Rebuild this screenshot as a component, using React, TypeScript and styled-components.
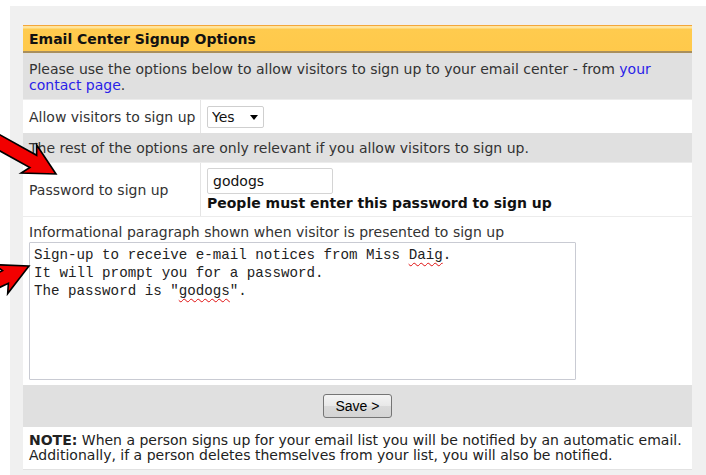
import React from "react";
import styled, { createGlobalStyle } from "styled-components";

const GlobalStyle = createGlobalStyle`
  html, body {
    margin: 0;
    padding: 0;
    background: #ffffff;
  }
  body {
    font-family: "DejaVu Sans", Verdana, sans-serif;
    font-size: 14px;
    color: #333333;
  }
`;

const Page = styled.div`
  position: relative;
  width: 706px;
  height: 475px;
  overflow: hidden;
  padding: 6px 0 0 10px;
  box-sizing: border-box;
`;

const Canvas = styled.div`
  background: #f0f0f0;
  height: 100%;
  padding: 19px 14px 0 13px;
  box-sizing: border-box;
`;

const Panel = styled.section`
  width: 669px;
  background: #ffffff;
  border-bottom: 1px solid #e2e2e2;
`;

const Header = styled.h2`
  margin: 0;
  height: 25px;
  box-sizing: content-box;
  display: flex;
  align-items: center;
  padding: 0 6px;
  font-size: 14px;
  font-weight: bold;
  color: #111111;
  border-top: 1px solid #f4a63a;
  border-bottom: 2px solid #a98f5c;
  background: linear-gradient(#ffe49c 0px, #ffe49c 2px, #ffcb4e 3px, #ffc94b 100%);
`;

const Band = styled.div<{ $pad: string }>`
  background: #e0e0e0;
  padding: ${(p) => p.$pad};
  line-height: 16px;
`;

const Link = styled.a`
  color: #2a22e8;
  text-decoration: none;
`;

const FieldRow = styled.div<{ $height: number }>`
  display: grid;
  grid-template-columns: 178px 1fr;
  height: ${(p) => p.$height}px;
  box-sizing: border-box;
  border-top: 1px solid #ececec;
`;

const LabelCell = styled.div`
  display: flex;
  align-items: center;
  padding: 0 0 0 6px;
  white-space: nowrap;
  border-right: 1px solid #e4e4e4;
`;

const ValueCell = styled.div`
  display: flex;
  flex-direction: column;
  justify-content: center;
  align-items: flex-start;
  padding: 0 6px;
`;

const SelectWrap = styled.div`
  position: relative;
  width: 57px;
  height: 22px;
`;

const Select = styled.select`
  appearance: none;
  width: 100%;
  height: 100%;
  margin: 0;
  padding: 0 0 0 4px;
  box-sizing: border-box;
  border: 1px solid #cfcfcf;
  border-radius: 2px;
  background: #ffffff;
  font-family: "DejaVu Sans", Verdana, sans-serif;
  font-size: 14px;
  color: #111111;
`;

const Caret = styled.span`
  position: absolute;
  right: 6px;
  top: 9px;
  width: 0;
  height: 0;
  border-left: 4px solid transparent;
  border-right: 4px solid transparent;
  border-top: 5px solid #000000;
  pointer-events: none;
`;

const TextInput = styled.input`
  width: 126px;
  height: 26px;
  margin: 0;
  padding: 0 5px;
  box-sizing: border-box;
  border: 1px solid #d4d4d4;
  border-radius: 2px;
  font-family: "DejaVu Sans", Verdana, sans-serif;
  font-size: 14px;
  color: #111111;
`;

const Hint = styled.strong`
  margin-top: 1px;
  color: #111111;
  line-height: 16px;
`;

const InfoBlock = styled.div`
  border-top: 1px solid #ececec;
  padding: 7px 6px 5px;
  line-height: 16px;
`;

const Message = styled.div`
  margin-top: 2px;
  width: 547px;
  height: 138px;
  box-sizing: border-box;
  border: 1px solid #c9cbd3;
  border-radius: 1px;
  padding: 3px 4px;
  font-family: "Liberation Mono", "Courier New", monospace;
  font-size: 14.2px;
  line-height: 18px;
  color: #222222;
  white-space: pre;
`;

const Misspelt = styled.span`
  text-decoration: underline wavy #e01010;
  text-decoration-thickness: 1px;
  text-underline-offset: 3px;
`;

const ButtonBand = styled.div`
  background: #e0e0e0;
  height: 42px;
  display: flex;
  align-items: center;
  justify-content: center;
`;

const Button = styled.button`
  width: 69px;
  height: 24px;
  margin: 0;
  padding: 0;
  border: 1px solid #757575;
  border-radius: 3px;
  background: linear-gradient(#f4f4f4, #e8e8e8 50%, #dadada 51%, #d4d4d4);
  font-family: "Liberation Sans", Arial, sans-serif;
  font-size: 14px;
  color: #000000;
`;

const Note = styled.p`
  margin: 0;
  padding: 6px 6px 6px;
  line-height: 15px;
  color: #222222;
`;

const Overlay = styled.svg`
  position: absolute;
  left: 0;
  top: 0;
  pointer-events: none;
`;

function Arrows() {
  const shape = "0,0 -31,-16 -26,-7 -110,-7 -110,7 -26,7 -31,16";
  return (
    <Overlay width="90" height="320" viewBox="0 0 90 320">
      <polygon
        points={shape}
        transform="translate(56 174) rotate(29)"
        fill="#f20000"
        stroke="#000"
        strokeWidth="1.6"
        strokeLinejoin="miter"
      />
      <polygon
        points={shape}
        transform="translate(29 266) rotate(-25)"
        fill="#f20000"
        stroke="#000"
        strokeWidth="1.6"
        strokeLinejoin="miter"
      />
    </Overlay>
  );
}

export default function App() {
  return (
    <>
      <GlobalStyle />
      <Page>
        <Canvas>
          <Panel>
            <Header>Email Center Signup Options</Header>
            <Band $pad="8px 6px 6px">
              Please use the options below to allow visitors to sign up to your email center - from{" "}
              <Link href="#">your contact page</Link>.
            </Band>
            <FieldRow $height={34}>
              <LabelCell>Allow visitors to sign up</LabelCell>
              <ValueCell>
                <SelectWrap>
                  <Select defaultValue="Yes">
                    <option>Yes</option>
                    <option>No</option>
                  </Select>
                  <Caret />
                </SelectWrap>
              </ValueCell>
            </FieldRow>
            <Band $pad="7px 6px 6px">
              The rest of the options are only relevant if you allow visitors to sign up.
            </Band>
            <FieldRow $height={54}>
              <LabelCell>Password to sign up</LabelCell>
              <ValueCell>
                <TextInput defaultValue="godogs" />
                <Hint>People must enter this password to sign up</Hint>
              </ValueCell>
            </FieldRow>
            <InfoBlock>
              Informational paragraph shown when visitor is presented to sign up
              <Message>
                {"Sign-up to receive e-mail notices from Miss "}
                <Misspelt>Daig</Misspelt>
                {".\nIt will prompt you for a password.\nThe password is \""}
                <Misspelt>godogs</Misspelt>
                {"\"."}
              </Message>
            </InfoBlock>
            <ButtonBand>
              <Button type="button">Save &gt;</Button>
            </ButtonBand>
            <Note>
              <strong>NOTE:</strong> When a person signs up for your email list you will be notified by an automatic email.
              <br />
              Additionally, if a person deletes themselves from your list, you will also be notified.
            </Note>
          </Panel>
        </Canvas>
        <Arrows />
      </Page>
    </>
  );
}
